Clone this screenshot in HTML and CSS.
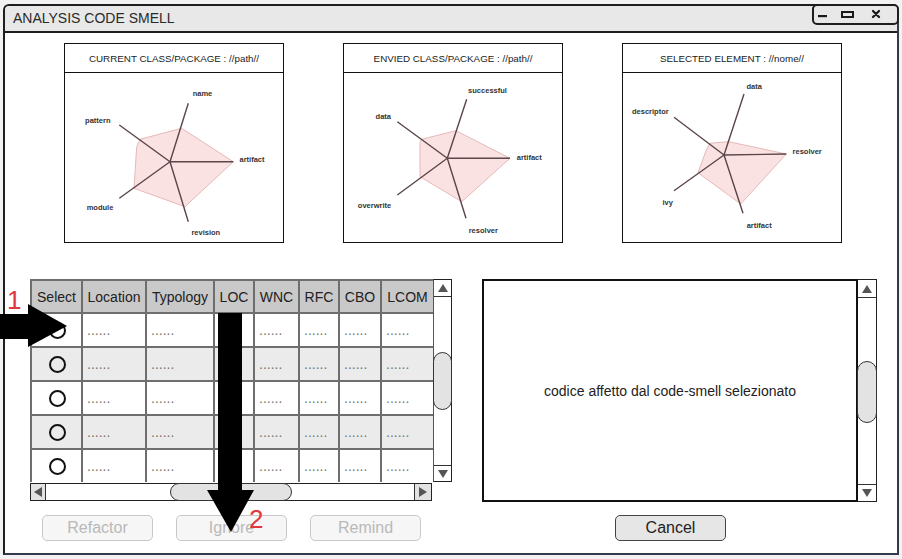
FILE: index.html
```html
<!DOCTYPE html>
<html>
<head>
<meta charset="utf-8">
<title>Analysis Code Smell</title>
<link rel="stylesheet" href="styles.css">
</head>
<body>
<div class="window">
  <div class="titlebar">
    <span class="title">ANALYSIS CODE SMELL</span>
    <div class="controls">
      <svg width="81" height="15" viewBox="0 0 81 15">
        <rect x="4" y="9" width="9" height="2.2" fill="#1a1a1a"/>
        <rect x="28" y="6" width="11" height="5" fill="none" stroke="#1a1a1a" stroke-width="2"/>
        <path d="M59 5 L65 11 M65 5 L59 11" stroke="#1a1a1a" stroke-width="2.3" stroke-linecap="round"/>
      </svg>
    </div>
  </div>

  <div class="content">
    <div class="charts">
      <div class="chart">
        <div class="chart-head">CURRENT CLASS/PACKAGE : //path//</div>
        <div class="chart-body">
          <svg class="radar" viewBox="1 0 218 168">
            <polygon class="area" points="117.7,55.3 169.3,88.7 121,133.7 70,115.3 72.7,73.7 76,66.3"/>
            <path class="axis" d="M106 88.7 L124.3 30.3 M106 88.7 L169.3 88.7 M106 88.7 L124.3 148.7 M106 88.7 L55.3 125.3 M106 88.7 L55.3 52"/>
            <text x="138.5" y="20.3">name</text>
            <text x="188" y="86.3">artifact</text>
            <text x="141.8" y="159.7">revision</text>
            <text x="36" y="134.7">module</text>
            <text x="33.8" y="47">pattern</text>
          </svg>
        </div>
      </div>
      <div class="chart">
        <div class="chart-head">ENVIED CLASS/PACKAGE : //path//</div>
        <div class="chart-body">
          <svg class="radar" viewBox="1 0 218 168">
            <polygon class="area" points="113,57.7 167,85.3 118.7,128.7 77,103.7 77,69 78.7,66.3"/>
            <path class="axis" d="M104.3 85.3 L123.7 26.3 M104.3 85.3 L167 85.3 M104.3 85.3 L123 145.3 M104.3 85.3 L54.3 122 M104.3 85.3 L54.3 48.7"/>
            <text x="144.5" y="17.7">successful</text>
            <text x="186.3" y="84.3">artifact</text>
            <text x="140.3" y="157.7">resolver</text>
            <text x="31.5" y="132">overwrite</text>
            <text x="40.3" y="43.7">data</text>
          </svg>
        </div>
      </div>
      <div class="chart">
        <div class="chart-head">SELECTED ELEMENT : //nome//</div>
        <div class="chart-body">
          <svg class="radar" viewBox="1 0 218 168">
            <polygon class="area" points="106.7,68.7 164.3,81 118.7,131 76,99.7 84.3,77 87.7,70.3"/>
            <path class="axis" d="M102 82 L122 21 M102 82 L164.3 81 M102 82 L121 140.3 M102 82 L52 117.7 M102 82 L52 44.3"/>
            <text x="132.2" y="13">data</text>
            <text x="185.2" y="78.7">resolver</text>
            <text x="137.2" y="152">artifact</text>
            <text x="45.7" y="129.7">ivy</text>
            <text x="28.3" y="38.7">descriptor</text>
          </svg>
        </div>
      </div>
    </div>

    <div class="lower">
      <div class="left-col">
        <div class="table-wrap">
          <div class="grid">
            <div class="th">Select</div><div class="th">Location</div><div class="th">Typology</div><div class="th">LOC</div><div class="th">WNC</div><div class="th">RFC</div><div class="th">CBO</div><div class="th">LCOM</div>

            <div class="td sel"><span class="radio"></span></div><div class="td">......</div><div class="td">......</div><div class="td">......</div><div class="td">......</div><div class="td">......</div><div class="td">......</div><div class="td">......</div>

            <div class="td alt sel"><span class="radio"></span></div><div class="td alt">......</div><div class="td alt">......</div><div class="td alt">......</div><div class="td alt">......</div><div class="td alt">......</div><div class="td alt">......</div><div class="td alt">......</div>

            <div class="td sel"><span class="radio"></span></div><div class="td">......</div><div class="td">......</div><div class="td">......</div><div class="td">......</div><div class="td">......</div><div class="td">......</div><div class="td">......</div>

            <div class="td alt sel"><span class="radio"></span></div><div class="td alt">......</div><div class="td alt">......</div><div class="td alt">......</div><div class="td alt">......</div><div class="td alt">......</div><div class="td alt">......</div><div class="td alt">......</div>

            <div class="td sel"><span class="radio"></span></div><div class="td">......</div><div class="td">......</div><div class="td">......</div><div class="td">......</div><div class="td">......</div><div class="td">......</div><div class="td">......</div>
          </div>
          <div class="vscroll">
            <div class="vbtn vbtn-up"><span class="tri-up"></span></div>
            <div class="vthumb table-thumb"></div>
            <div class="vspacer"></div>
            <div class="vbtn vbtn-down"><span class="tri-down"></span></div>
          </div>
        </div>
        <div class="hscroll">
          <div class="hbtn hbtn-left"><span class="tri-left"></span></div>
          <div class="hthumb"></div>
          <div class="hspacer"></div>
          <div class="hbtn hbtn-right"><span class="tri-right"></span></div>
        </div>
        <div class="buttons">
          <button class="btn disabled">Refactor</button>
          <button class="btn disabled">Ignore</button>
          <button class="btn disabled">Remind</button>
        </div>
      </div>

      <div class="right-col">
        <div class="panel">
          <div class="code-area">codice affetto dal code-smell selezionato</div>
          <div class="vscroll panel-scroll">
            <div class="vbtn vbtn-up"><span class="tri-up"></span></div>
            <div class="vthumb panel-thumb"></div>
            <div class="vspacer"></div>
            <div class="vbtn vbtn-down"><span class="tri-down"></span></div>
          </div>
        </div>
        <button class="btn cancel">Cancel</button>
      </div>
    </div>
  </div>
</div>

<svg class="annot" width="902" height="559" viewBox="0 0 902 559">
  <polygon points="0,314 28,314 28,304 67,326 28,347 28,339 0,339" fill="#000"/>
  <polygon points="218,313 242,313 242,490 254,490 231,532 207,490 218,490" fill="#000"/>
</svg>
<span class="num num1">1</span>
<span class="num num2">2</span>
</body>
</html>
```

FILE: styles.css
```css
* { box-sizing: border-box; }

body {
  margin: 0;
  width: 902px;
  height: 559px;
  background: #f2f2f2;
  font-family: "Liberation Sans", Arial, sans-serif;
  color: #222;
  position: relative;
  overflow: hidden;
}

.window {
  margin: 4px 0 0 3px;
  width: 896px;
  height: 551px;
  border: 2px solid #1e1e1e;
  border-right-color: #353950;
  border-bottom-color: #353950;
  border-radius: 6px 6px 0 0;
  background: #fff;
}

.titlebar {
  height: 27px;
  background: #e8e8e8;
  border-bottom: 2px solid #1e1e1e;
  border-radius: 5px 5px 0 0;
  display: flex;
  justify-content: space-between;
  align-items: flex-start;
  padding-left: 8px;
}

.title {
  font-size: 14px;
  line-height: 25px;
  color: #2a2a2a;
}

.controls {
  margin-top: -2px;
  margin-right: -2px;
  width: 87px;
  height: 21px;
  border: 2px solid #1e1e1e;
  border-radius: 5px;
  background: #e8e8e8;
  display: flex;
}

.controls svg { display: block; }

.content {
  padding-top: 10px;
}

.charts {
  display: flex;
  gap: 59px;
  padding-left: 59px;
}

.chart {
  width: 220px;
  height: 200px;
  border: 1px solid #111;
  display: flex;
  flex-direction: column;
  background: #fff;
}

.chart-head {
  height: 29px;
  border-bottom: 1px solid #111;
  font-size: 9.8px;
  display: flex;
  align-items: center;
  justify-content: center;
  color: #222;
  white-space: nowrap;
}

.chart-body {
  flex: 1;
}

.radar {
  display: block;
  width: 218px;
  height: 168px;
}

.radar .area {
  fill: #fbe2e2;
  stroke: #e6b9b9;
  stroke-width: 1;
}

.radar .axis {
  stroke: #5a4549;
  stroke-width: 1.4;
  fill: none;
}

.radar text {
  font-family: "Liberation Sans", Arial, sans-serif;
  font-size: 7.5px;
  font-weight: bold;
  fill: #333;
  text-anchor: middle;
  dominant-baseline: central;
}

.lower {
  display: flex;
  gap: 30px;
  padding-left: 25px;
  margin-top: 36px;
}

.left-col {
  width: 422px;
}

.table-wrap {
  display: flex;
  height: 203px;
}

.grid {
  width: 403px;
  display: grid;
  grid-template-columns: 49px 62px 66px 38px 43px 38px 40px 51px;
  grid-template-rows: 31px repeat(5, 32px);
  gap: 2px;
  padding: 2px 0 0 2px;
  background: #6e6e6e;
}

.th {
  background: #c9c9c9;
  font-size: 14px;
  display: flex;
  align-items: center;
  justify-content: center;
  color: #222;
  white-space: nowrap;
}

.td {
  background: #fff;
  font-size: 14px;
  color: #777;
  display: flex;
  align-items: center;
  padding-left: 4px;
}

.td.alt { background: #ebebeb; }

.td.sel {
  justify-content: center;
  padding-left: 0;
}

.radio {
  width: 17px;
  height: 17px;
  border: 2px solid #111;
  border-radius: 50%;
  margin-left: 1px;
}

.vscroll {
  width: 19px;
  border: 1px solid #222;
  border-left-color: #555;
  display: flex;
  flex-direction: column;
  background: #fff;
}

.vbtn {
  display: flex;
  align-items: center;
  justify-content: center;
  background: #fff;
}

.vbtn-up {
  height: 17px;
  border-bottom: 1px solid #333;
}

.vbtn-down {
  height: 16px;
  border-top: 1px solid #333;
}

.vthumb {
  margin-left: -1px;
  margin-right: -1px;
  background: #e3e3e3;
  border: 1px solid #333;
  border-radius: 10px;
}

.table-thumb {
  margin-top: 55px;
  height: 58px;
}

.vspacer { flex: 1; }

.tri-up, .tri-down {
  width: 0;
  height: 0;
  border-left: 5px solid transparent;
  border-right: 5px solid transparent;
}

.tri-up { border-bottom: 8px solid #555; }
.tri-down { border-top: 8px solid #555; }

.tri-left, .tri-right {
  width: 0;
  height: 0;
  border-top: 5px solid transparent;
  border-bottom: 5px solid transparent;
}

.tri-left { border-right: 8px solid #555; }
.tri-right { border-left: 8px solid #555; }

.hscroll {
  margin-top: 1px;
  width: 402px;
  height: 18px;
  border: 1px solid #222;
  display: flex;
  background: #fff;
}

.hbtn {
  width: 15px;
  display: flex;
  align-items: center;
  justify-content: center;
  background: #e2e2e2;
}

.hbtn-left { border-right: 1px solid #333; }
.hbtn-right { width: 17px; border-left: 1px solid #333; }

.hthumb {
  margin-left: 124px;
  width: 122px;
  margin-top: -1px;
  margin-bottom: -1px;
  background: #e3e3e3;
  border: 1px solid #333;
  border-radius: 10px;
}

.hspacer { flex: 1; }

.buttons {
  display: flex;
  gap: 23px;
  padding-left: 12px;
  margin-top: 14px;
}

.btn {
  width: 111px;
  height: 26px;
  border-radius: 5px;
  font-family: "Liberation Sans", Arial, sans-serif;
  font-size: 16px;
  padding: 0;
}

.btn.disabled {
  background: #f6f6f6;
  border: 1px solid #c8c8c8;
  color: #b9b9b9;
}

.right-col {
  width: 395px;
  display: flex;
  flex-direction: column;
}

.panel {
  display: flex;
  height: 223px;
}

.code-area {
  width: 376px;
  border: 2px solid #111;
  display: flex;
  align-items: center;
  justify-content: center;
  font-size: 14px;
  color: #222;
}

.panel-scroll {
  width: 19px;
  border-left: none;
  border-color: #222;
}

.panel-scroll .vbtn-up { height: 18px; }
.panel-scroll .vbtn-down { height: 17px; }

.panel-thumb {
  margin-top: 63px;
  height: 62px;
}

.btn.cancel {
  margin-top: 13px;
  margin-left: 133px;
  background: #e6e6e6;
  border: 1px solid #444;
  color: #222;
}

.annot {
  position: absolute;
  left: 0;
  top: 0;
  pointer-events: none;
}

.num {
  position: absolute;
  font-family: "Liberation Sans", Arial, sans-serif;
  font-size: 26px;
  line-height: 26px;
  color: #e0383c;
}

.num1 { left: 7px; top: 287px; }
.num2 { left: 249px; top: 506px; }
```
